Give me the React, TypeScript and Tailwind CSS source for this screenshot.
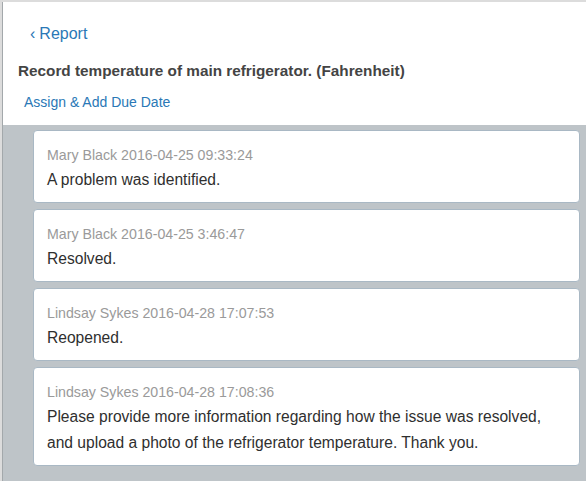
import React from "react";

const comments = [
  { meta: "Mary Black 2016-04-25 09:33:24", body: ["A problem was identified."] },
  { meta: "Mary Black 2016-04-25 3:46:47", body: ["Resolved."] },
  { meta: "Lindsay Sykes 2016-04-28 17:07:53", body: ["Reopened."] },
  {
    meta: "Lindsay Sykes 2016-04-28 17:08:36",
    body: [
      "Please provide more information regarding how the issue was resolved,",
      "and upload a photo of the refrigerator temperature. Thank you.",
    ],
  },
];

export default function App() {
  return (
    <div
      className="w-[586px] h-[481px] overflow-hidden bg-[#dcdcdc] pl-[2px] pt-[2px]"
      style={{ fontFamily: '"Liberation Sans", Arial, sans-serif' }}
    >
      <div className="h-full border-l border-[#a3a8ab] bg-[#bec4c8] flex flex-col">
        <div className="h-[123px] bg-white flex flex-col">
          <div className="pl-[27px] pt-[20px] text-[16px] leading-[24px] text-[#2a78b6]">
            <span className="mr-[4px]">‹</span>Report
          </div>
          <div className="pl-[15px] pt-[15px] text-[15.3px] leading-[20px] font-bold text-[#444]">
            Record temperature of main refrigerator. (Fahrenheit)
          </div>
          <div className="pl-[21px] pt-[12px] text-[14px] leading-[18px] text-[#2a78b6]">
            Assign &amp; Add Due Date
          </div>
        </div>
        <div className="flex flex-col gap-[6px] pt-[5px] pl-[30px] pr-[6px]">
          {comments.map((c, i) => (
            <div
              key={i}
              className="bg-white border border-[#a9b8c4] rounded-[4px] pl-[13px] pr-[10px] pt-[15px] pb-[9px]"
            >
              <div className="text-[14.2px] leading-[18px] text-[#9a9a9a]">{c.meta}</div>
              <div className="mt-[3px] text-[15.6px] leading-[26px] text-[#2f2f2f]">
                {c.body.map((l, j) => (
                  <div key={j} className="whitespace-nowrap">{l}</div>
                ))}
              </div>
            </div>
          ))}
        </div>
      </div>
    </div>
  );
}
